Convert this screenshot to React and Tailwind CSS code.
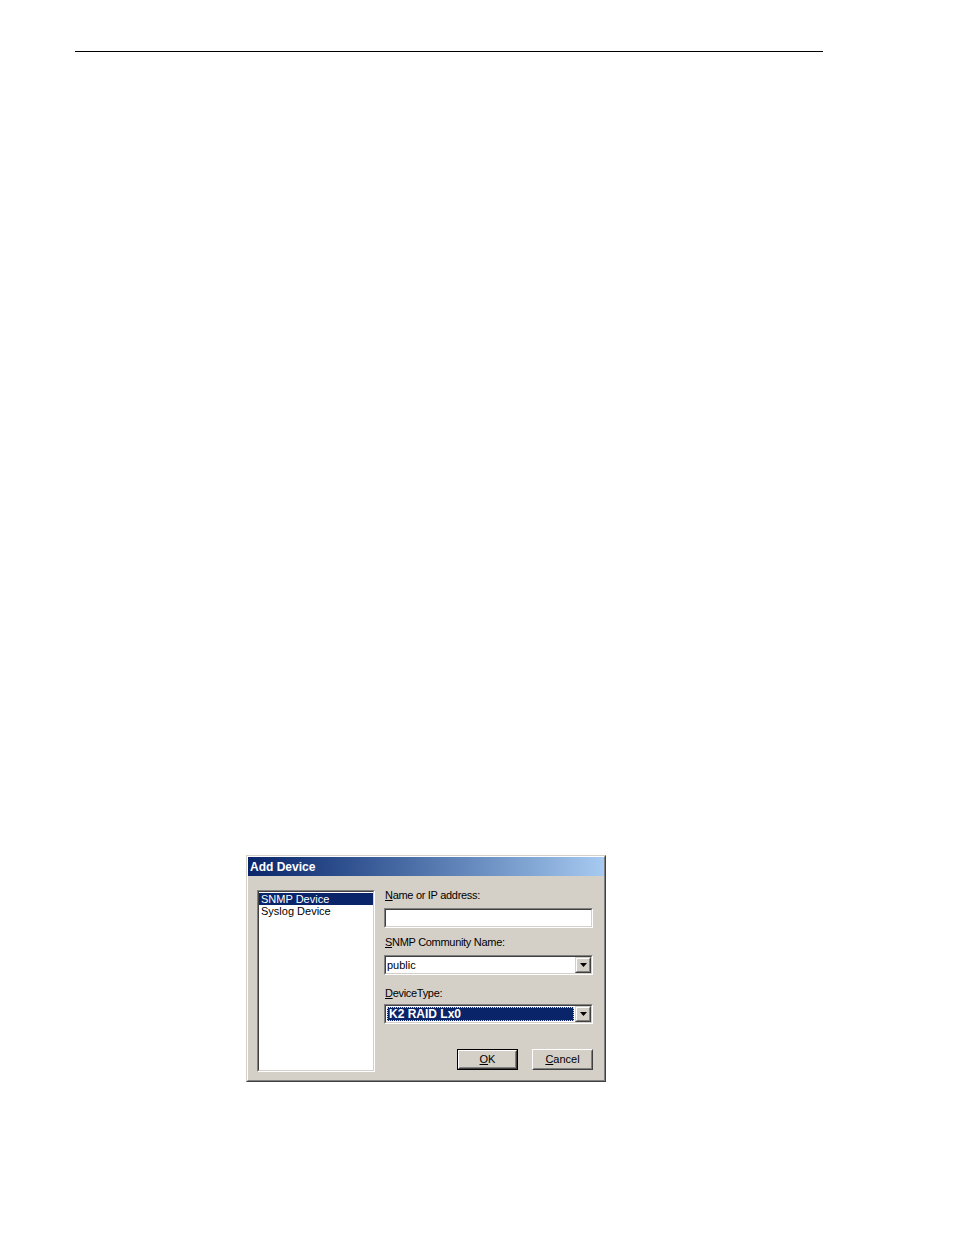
export default function App() {
  const face = "bg-[#d4d0c8]";
  const font = { fontFamily: '"Liberation Sans", Arial, sans-serif' };
  const Sunken = ({ className = "", children }) => (
    <div className={`border border-t-[#808080] border-l-[#808080] border-b-white border-r-white ${className}`}>
      <div className="w-full h-full border border-t-[#404040] border-l-[#404040] border-b-[#d4d0c8] border-r-[#d4d0c8] bg-white flex">
        {children}
      </div>
    </div>
  );
  const Arrow = () => (
    <div className="w-[16px] h-full border border-t-[#d4d0c8] border-l-[#d4d0c8] border-b-[#404040] border-r-[#404040] shrink-0">
      <div className={`w-full h-full border border-t-white border-l-white border-b-[#808080] border-r-[#808080] ${face} flex items-center justify-center`}>
        <svg width="7" height="4" viewBox="0 0 7 4"><path d="M0 0H7L3.5 4Z" fill="#000" /></svg>
      </div>
    </div>
  );
  const Button = ({ label, def }) => {
    const inner = (
      <div className="w-full h-full border border-t-white border-l-white border-b-[#404040] border-r-[#404040]">
        <div className={`w-full h-full border border-t-[#d4d0c8] border-l-[#d4d0c8] border-b-[#808080] border-r-[#808080] ${face} flex items-center justify-center text-[11px] text-black leading-none`}>
          <span><span className="underline">{label[0]}</span>{label.slice(1)}</span>
        </div>
      </div>
    );
    return def ? (
      <div className="w-[61px] h-[21px] border border-black">{inner}</div>
    ) : (
      <div className="w-[61px] h-[21px]">{inner}</div>
    );
  };
  return (
    <div className="w-[954px] h-[1235px] bg-white relative overflow-hidden" style={font}>
      <div className="pt-[51px] pl-[75px]">
        <div className="w-[748px] h-px bg-black" />
      </div>
      <div className="ml-[246px] mt-[803px] w-[360px] h-[227px] border border-t-[#d4d0c8] border-l-[#d4d0c8] border-b-[#404040] border-r-[#404040]">
        <div className={`w-full h-full border border-t-white border-l-white border-b-[#808080] border-r-[#808080] ${face} flex flex-col`}>
          <div className="h-[19px] bg-gradient-to-r from-[#0a246a] to-[#a6caf0] flex items-center pl-[2px]">
            <span className="text-white font-bold text-[12px] leading-none">Add Device</span>
          </div>
          <div className="flex pl-[9px] pt-[12px]">
            <Sunken className="mt-[2px] w-[118px] h-[182px]">
              <div className="flex flex-col w-full pt-px text-[11px] leading-[12px]">
                <div className="bg-[#0a246a] text-white px-[2px]">SNMP Device</div>
                <div className="text-black px-[2px]">Syslog Device</div>
              </div>
            </Sunken>
            <div className="ml-[9px] w-[210px] flex flex-col text-[11px] text-black">
              <div className="h-[14px] leading-[14px] tracking-[-0.3px] pl-px"><span className="underline">N</span>ame or IP address:</div>
              <Sunken className="mt-[6px] h-[20px] w-[209px]" />
              <div className="mt-[7px] h-[14px] leading-[14px] tracking-[-0.3px] pl-px"><span className="underline">S</span>NMP Community Name:</div>
              <Sunken className="mt-[6px] h-[20px] w-[209px]">
                <div className="flex-1 pl-[1px] leading-[16px]">public</div>
                <Arrow />
              </Sunken>
              <div className="mt-[11px] h-[14px] leading-[14px] tracking-[-0.3px] pl-px"><span className="underline">D</span>eviceType:</div>
              <Sunken className="mt-[4px] h-[20px] w-[209px]">
                <div className="flex-1 p-px flex">
                  <div className="flex-1 bg-[#0a246a] border border-dotted border-[#e8dc8c] text-white font-bold text-[12px] leading-[12px] pl-[1px]">K2 RAID Lx0</div>
                </div>
                <Arrow />
              </Sunken>
              <div className="mt-[25px] flex justify-end gap-[14px] pr-[1px]">
                <Button label="OK" def />
                <Button label="Cancel" />
              </div>
            </div>
          </div>
        </div>
      </div>
    </div>
  );
}
